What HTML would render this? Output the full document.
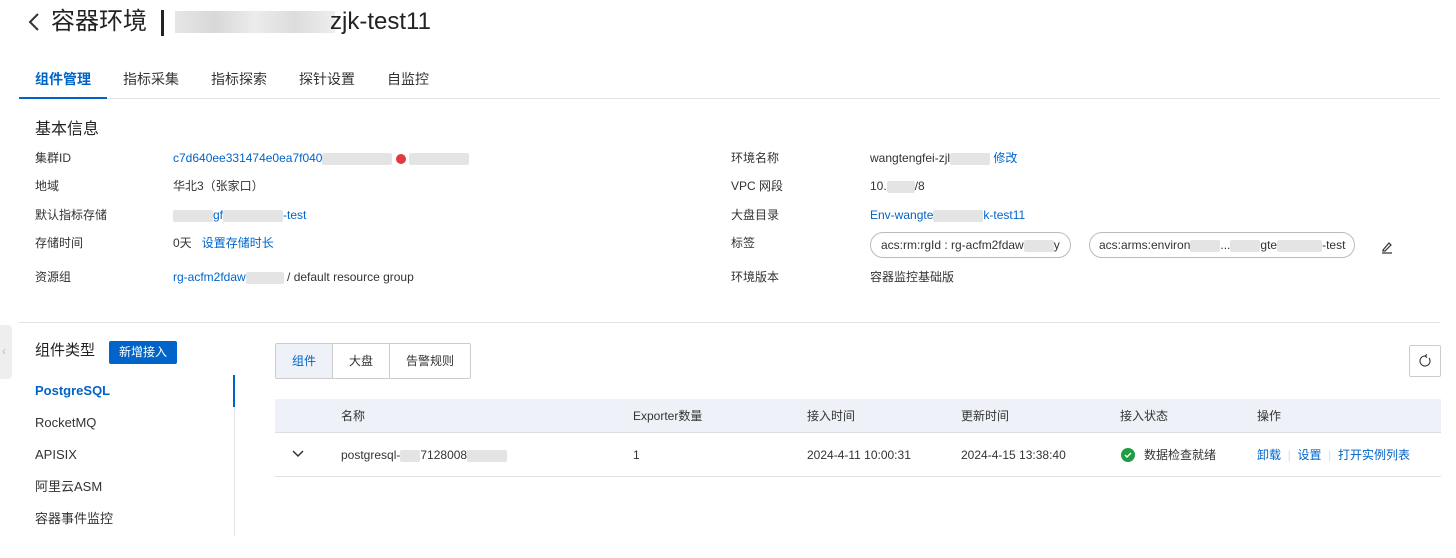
<!DOCTYPE html>
<html><head><meta charset="utf-8"><style>
*{margin:0;padding:0;box-sizing:border-box}
body{width:1456px;height:558px;background:#fff;font-family:"Liberation Sans","Noto Sans CJK SC",sans-serif;color:#333;font-size:12px;line-height:16px;position:relative;overflow:hidden}
.a{position:absolute;white-space:nowrap}
.blue{color:#0064c8}
.blur{display:inline-block;background:#e4e4e4;height:12px;vertical-align:middle;border-radius:2px}
</style></head><body>
<svg class="a" style="left:27px;top:12px" width="14" height="20" viewBox="0 0 14 20"><path d="M11 2 L3 10 L11 18" fill="none" stroke="#333" stroke-width="2"/></svg>
<div class="a" style="left:51px;top:6px;font-size:24px;line-height:32px;color:#222">容器环境</div>
<div class="a" style="left:161px;top:10px;width:3px;height:26px;background:#222"></div>
<div class="a" style="left:175px;top:11px;width:160px;height:22px;background:linear-gradient(90deg,#e6e6e6,#d8d8d8,#ececec,#dcdcdc,#eee)"></div>
<div class="a" style="left:330px;top:6px;font-size:24px;line-height:32px;color:#222">zjk-test11</div>
<div class="a" style="left:35px;top:70px;font-size:14px;line-height:18px;color:#0064c8;font-weight:bold">组件管理</div>
<div class="a" style="left:123px;top:70px;font-size:14px;line-height:18px">指标采集</div>
<div class="a" style="left:211px;top:70px;font-size:14px;line-height:18px">指标探索</div>
<div class="a" style="left:299px;top:70px;font-size:14px;line-height:18px">探针设置</div>
<div class="a" style="left:387px;top:70px;font-size:14px;line-height:18px">自监控</div>
<div class="a" style="left:19px;top:98px;width:1421px;height:1px;background:#e3e3e3"></div>
<div class="a" style="left:19px;top:97px;width:88px;height:2px;background:#0064c8"></div>
<div class="a" style="left:35px;top:120px;font-size:16px;line-height:20px;color:#222">基本信息</div>
<div class="a" style="left:35px;top:150px">集群ID</div>
<div class="a blue" style="left:173px;top:150px">c7d640ee331474e0ea7f040<span class="blur" style="width:70px"></span> <span style="display:inline-block;width:10px;height:10px;border-radius:5px;background:#e0393e;vertical-align:middle"></span> <span class="blur" style="width:60px"></span></div>
<div class="a" style="left:35px;top:178px">地域</div>
<div class="a" style="left:173px;top:178px">华北3（张家口）</div>
<div class="a" style="left:35px;top:207px">默认指标存储</div>
<div class="a blue" style="left:173px;top:207px"><span class="blur" style="width:40px"></span>gf<span class="blur" style="width:60px"></span>-test</div>
<div class="a" style="left:35px;top:235px">存储时间</div>
<div class="a" style="left:173px;top:235px">0天 &nbsp;&nbsp;<span class="blue">设置存储时长</span></div>
<div class="a" style="left:35px;top:269px">资源组</div>
<div class="a" style="left:173px;top:269px"><span class="blue">rg-acfm2fdaw<span class="blur" style="width:38px"></span></span> / default resource group</div>
<div class="a" style="left:731px;top:150px">环境名称</div>
<div class="a" style="left:870px;top:150px">wangtengfei-zjl<span class="blur" style="width:40px"></span> <span class="blue">修改</span></div>
<div class="a" style="left:731px;top:178px">VPC 网段</div>
<div class="a" style="left:870px;top:178px">10.<span class="blur" style="width:28px"></span>/8</div>
<div class="a" style="left:731px;top:207px">大盘目录</div>
<div class="a blue" style="left:870px;top:207px">Env-wangte<span class="blur" style="width:50px"></span>k-test11</div>
<div class="a" style="left:731px;top:235px">标签</div>
<div class="a" style="left:870px;top:232px;height:26px;border:1px solid #bbb;border-radius:13px;padding:4px 10px">acs:rm:rgId : rg-acfm2fdaw<span class="blur" style="width:30px"></span>y</div>
<div class="a" style="left:1089px;top:232px;height:26px;border:1px solid #bbb;border-radius:13px;padding:4px 9px">acs:arms:environ<span class="blur" style="width:30px"></span>...<span class="blur" style="width:30px"></span>gte<span class="blur" style="width:45px"></span>-test</div>
<svg class="a" style="left:1380px;top:240px" width="14" height="14" viewBox="0 0 14 14"><path d="M3 10 L9 3 L11 5 L5 11 L3 11 Z M2 13 H12" fill="none" stroke="#333" stroke-width="1.2"/></svg>
<div class="a" style="left:731px;top:269px">环境版本</div>
<div class="a" style="left:870px;top:269px">容器监控基础版</div>
<div class="a" style="left:19px;top:322px;width:1421px;height:1px;background:#e3e3e3"></div>
<div class="a" style="left:0;top:325px;width:12px;height:54px;background:#eee;border-radius:0 4px 4px 0"></div>
<div class="a" style="left:2px;top:343px;color:#bbb;font-size:12px">&lsaquo;</div>
<div class="a" style="left:35px;top:341px;font-size:15px;line-height:20px;color:#222">组件类型</div>
<div class="a" style="left:109px;top:341px;width:68px;height:23px;background:#0064c8;color:#fff;text-align:center;line-height:23px;border-radius:2px">新增接入</div>
<div class="a" style="left:234px;top:375px;width:1px;height:161px;background:#e3e3e3"></div>
<div class="a" style="left:233px;top:375px;width:2px;height:32px;background:#0064c8"></div>
<div class="a blue" style="left:35px;top:383px;font-weight:bold;font-size:13px">PostgreSQL</div>
<div class="a" style="left:35px;top:415px;font-size:13px">RocketMQ</div>
<div class="a" style="left:35px;top:447px;font-size:13px">APISIX</div>
<div class="a" style="left:35px;top:479px;font-size:13px">阿里云ASM</div>
<div class="a" style="left:35px;top:511px;font-size:13px">容器事件监控</div>
<div class="a" style="left:275px;top:343px;width:196px;height:36px;border:1px solid #ccc;border-radius:2px;display:flex">
<div style="width:57px;background:#eef1f7;border-right:1px solid #ccc;color:#0064c8;text-align:center;line-height:34px">组件</div>
<div style="width:57px;border-right:1px solid #ccc;text-align:center;line-height:34px">大盘</div>
<div style="flex:1;text-align:center;line-height:34px">告警规则</div></div>
<div class="a" style="left:1409px;top:345px;width:32px;height:32px;border:1px solid #ccc;border-radius:2px"></div>
<svg class="a" style="left:1418px;top:354px" width="14" height="14" viewBox="0 0 14 14"><path d="M11 4 A5 5 0 1 1 7 2 M7 2 L9 0.5 M7 2 L9 3.5" fill="none" stroke="#333" stroke-width="1.1"/></svg>
<div class="a" style="left:275px;top:399px;width:1166px;height:34px;background:#eef1f7;border-bottom:1px solid #ddd"></div>
<div class="a" style="left:275px;top:476px;width:1166px;height:1px;background:#e3e3e3"></div>
<div class="a" style="left:341px;top:408px">名称</div>
<div class="a" style="left:633px;top:408px">Exporter数量</div>
<div class="a" style="left:807px;top:408px">接入时间</div>
<div class="a" style="left:961px;top:408px">更新时间</div>
<div class="a" style="left:1120px;top:408px">接入状态</div>
<div class="a" style="left:1257px;top:408px">操作</div>
<svg class="a" style="left:292px;top:450px" width="12" height="8" viewBox="0 0 12 8"><path d="M1 1 L6 6 L11 1" fill="none" stroke="#333" stroke-width="1.5"/></svg>
<div class="a" style="left:341px;top:447px">postgresql-<span class="blur" style="width:20px"></span>7128008<span class="blur" style="width:40px"></span></div>
<div class="a" style="left:633px;top:447px">1</div>
<div class="a" style="left:807px;top:447px">2024-4-11 10:00:31</div>
<div class="a" style="left:961px;top:447px">2024-4-15 13:38:40</div>
<svg class="a" style="left:1121px;top:448px" width="14" height="14" viewBox="0 0 14 14"><circle cx="7" cy="7" r="7" fill="#1e9e40"/><path d="M4 7 L6 9 L10 5" fill="none" stroke="#fff" stroke-width="1.5"/></svg>
<div class="a" style="left:1144px;top:447px">数据检查就绪</div>
<div class="a blue" style="left:1257px;top:447px">卸载 <span style="color:#ddd">&nbsp;|&nbsp;</span> 设置 <span style="color:#ddd">&nbsp;|&nbsp;</span> 打开实例列表</div>
</body></html>
